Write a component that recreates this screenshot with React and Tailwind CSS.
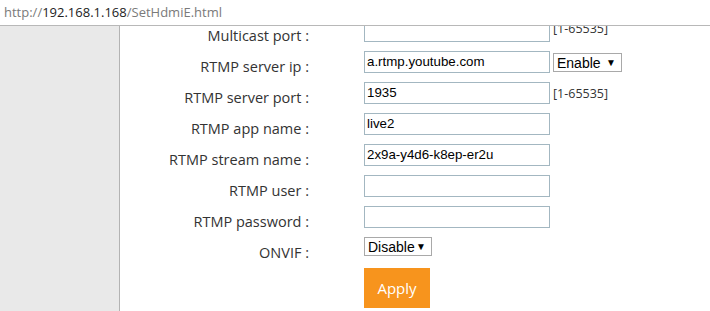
import React from 'react'

const rows = [
  { label: 'Multicast port :', value: '', hint: '[1-65535]' },
  { label: 'RTMP server ip :', value: 'a.rtmp.youtube.com', select: 'Enable' },
  { label: 'RTMP server port :', value: '1935', hint: '[1-65535]' },
  { label: 'RTMP app name :', value: 'live2' },
  { label: 'RTMP stream name :', value: '2x9a-y4d6-k8ep-er2u' },
  { label: 'RTMP user :', value: '' },
  { label: 'RTMP password :', value: '' },
]

const FakeSelect = ({ text, className }) => (
  <div
    className={`flex items-center justify-between h-[19px] bg-white border border-[#a9a9a9] pl-[3px] pr-[5px] text-[14px] leading-none text-black ${className}`}
    style={{ fontFamily: '"Liberation Sans", Arial, sans-serif' }}
  >
    <span>{text}</span>
    <span className="text-[10px]">▼</span>
  </div>
)

const App = () => {
  return (
    <div className="w-[710px] h-[311px] overflow-hidden bg-white flex flex-col" style={{ fontFamily: '"Open Sans", "Noto Sans", sans-serif' }}>
      <div className="h-[26px] shrink-0 flex items-center pl-[4px] border-b border-[#b8b8b8] bg-white relative z-10 text-[13px]">
        <span className="text-[#7a7a7a]">http://</span>
        <span className="text-[#222]">192.168.1.168</span>
        <span className="text-[#7a7a7a]">/SetHdmiE.html</span>
      </div>
      <div className="flex flex-1 min-h-0">
        <div className="w-[120px] shrink-0 bg-[#e9e9e9] border-r border-[#b3b3b3]" />
        <div className="flex-1 overflow-hidden">
          <div className="mt-[-6px] flex flex-col">
            {rows.map((r, i) => (
              <div key={r.label} className="flex h-[31px] items-start">
                <div className="w-[189px] text-right pt-[6px] text-[14.5px] leading-[19px] text-[#333]">{r.label}</div>
                <div className="ml-[55px] w-[186px] h-[22px] border border-[#a3b7c1] bg-white px-[2px] flex items-center text-[13.3px] text-black" style={{ fontFamily: '"Liberation Sans", Arial, sans-serif' }}>
                  {r.value}
                </div>
                {r.hint && (
                  <div className={`ml-[3px] text-[12.5px] leading-[17px] text-[#333] ${i === 0 ? 'pt-0' : 'pt-[3px]'}`}>{r.hint}</div>
                )}
                {r.select && <FakeSelect text={r.select} className="ml-[3px] mt-[2px] w-[69px]" />}
              </div>
            ))}
            <div className="flex h-[31px] items-start">
              <div className="w-[189px] text-right pt-[6px] text-[14.5px] leading-[19px] text-[#333]">ONVIF :</div>
              <FakeSelect text="Disable" className="ml-[55px] w-[68px]" />
            </div>
            <div className="flex">
              <div className="ml-[244px] w-[66px] h-[40px] bg-[#f7941d] text-white text-[15px] flex items-center justify-center" style={{ fontFamily: '"Open Sans", sans-serif' }}>
                Apply
              </div>
            </div>
          </div>
        </div>
      </div>
    </div>
  )
}

export default App
